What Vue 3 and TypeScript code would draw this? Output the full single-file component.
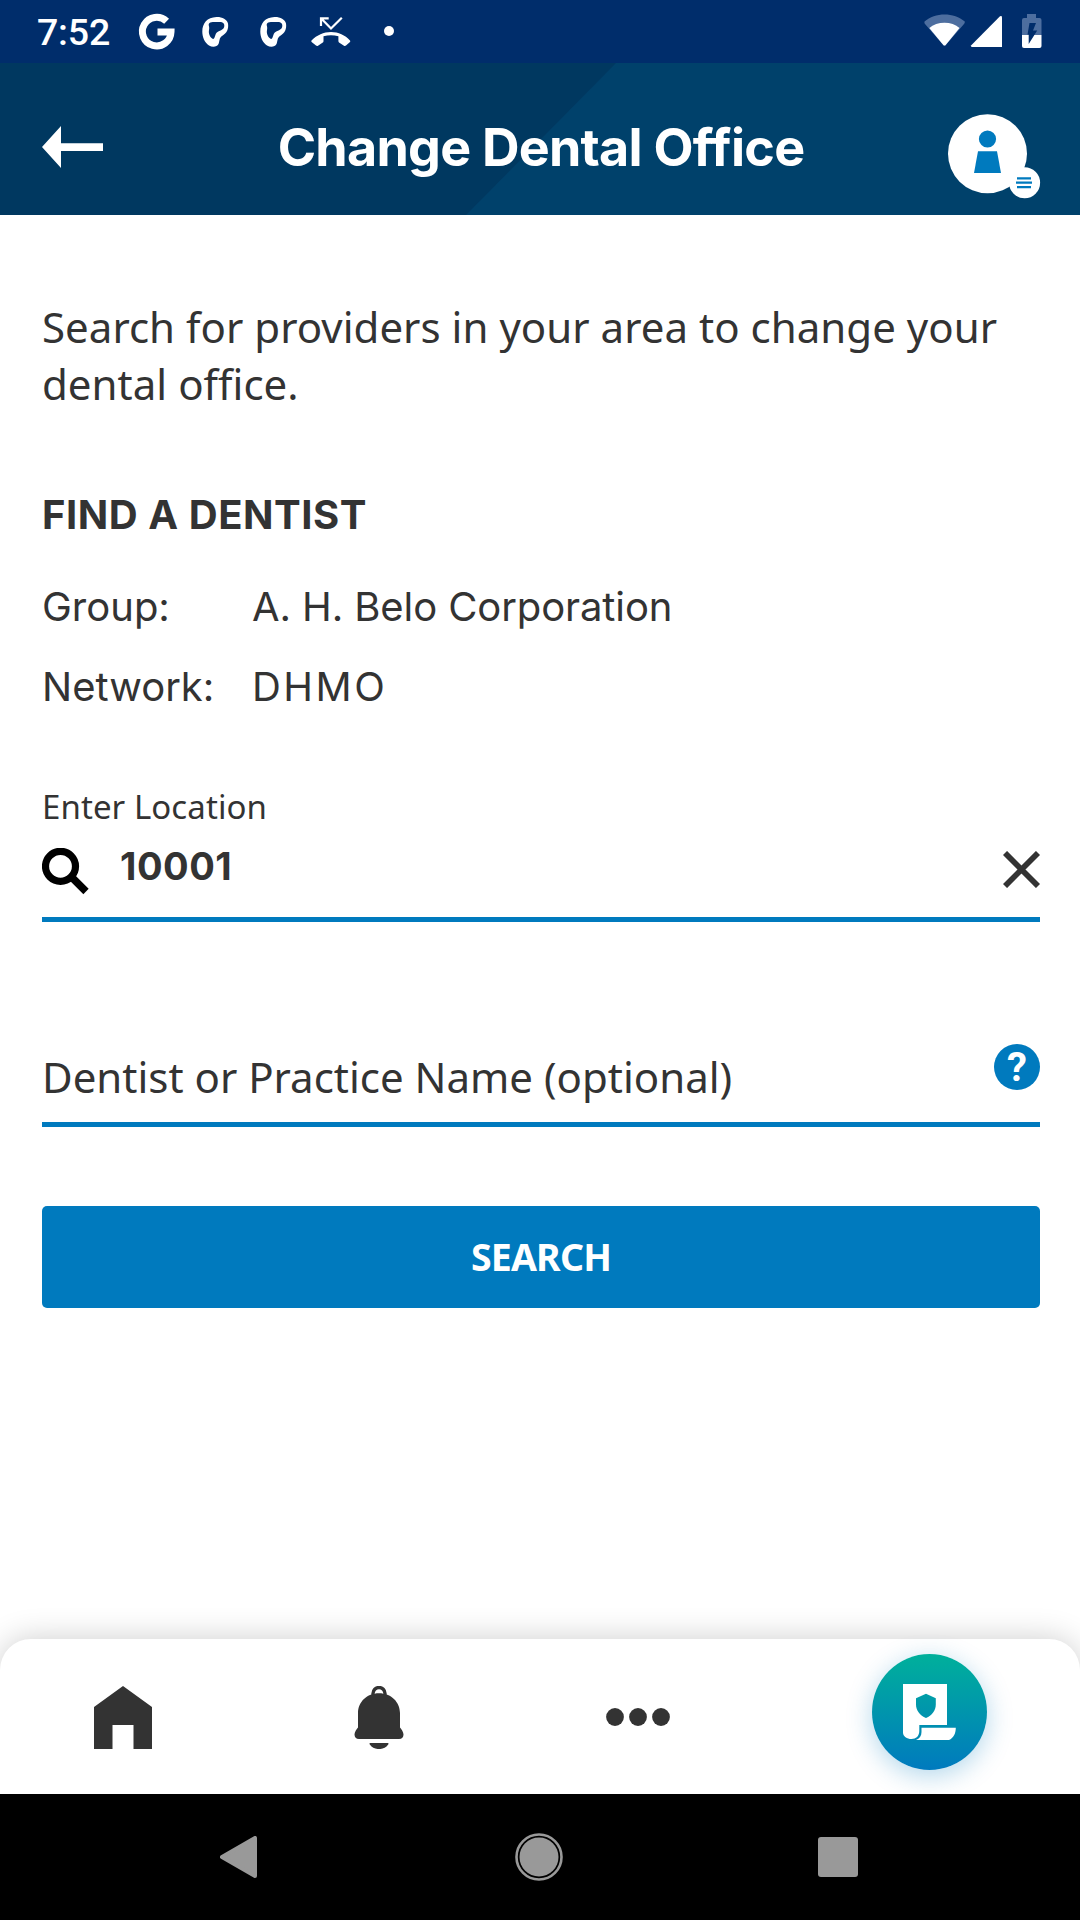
<script setup lang="ts">
interface Detail {
  label: string
  value: string
  acronym?: boolean
}

const details: Detail[] = [
  { label: 'Group:', value: 'A. H. Belo Corporation' },
  { label: 'Network:', value: 'DHMO', acronym: true },
]
</script>

<template>
  <div class="screen">
    <div class="status">
      <span class="clock">7:52</span>
      <svg class="status-left" width="270" height="63" viewBox="130 0 270 63">
        <path d="M166.600 21.300A14.300 14.300 0 1 0 171 32H157.500" fill="none" stroke="#fff" stroke-width="7" />
        <g v-for="dx in [0, 58]" :key="dx" :transform="`translate(${dx} 0)`">
          <path
            fill="#fff"
            fill-rule="evenodd"
            d="M216.500 17C222 16.800 227 19.500 228 23.500C228.800 29 227 33 222 36C219 38 219.800 41 218.500 44C217 47 212.500 47.500 209 45.500C204.500 42.500 202.300 37 202.300 31.500C202.300 23.500 207 17.300 216.500 17ZM209.500 23C207.500 25 210 26 209 30C208.300 33.500 210 37.500 213 39C215.500 38.500 214.500 34 217.500 32C221 30 224 29.500 224.300 26C224.500 22.500 222 22 218.500 22C215 22 211 21.500 209.500 23Z"
          />
        </g>
        <path d="M321 26V18.300H328.700M321.500 18.800L331 28.500L341.800 17.800" fill="none" stroke="#fff" stroke-width="2.200" />
        <path
          fill="#fff"
          d="M311.500 40.500C317 35 323.500 32 331 32C338.500 32 345 35 350 40.500C350.400 41 350.400 41.500 350 42L346 45.500C345.500 46 344.700 46.200 344 45.700L339 42.500C338.600 42 338.400 41.700 338.400 41V36.300C333.500 35 328.500 35 323.500 36.300V41C323.500 41.700 323.300 42.200 322.800 42.500L318 45.700C317.300 46.200 316.500 46 316 45.500L311.600 42C311.200 41.500 311.200 41 311.500 40.500Z"
        />
        <circle cx="389" cy="31" r="5" fill="#fff" />
      </svg>
      <svg class="status-right" width="130" height="63" viewBox="920 0 130 63">
        <path d="M924.500 21.500C935 12 954 12 964.800 21.500Q965 23 964 24L945.500 45.200Q944.500 46 943.500 45.200L925 24Q924 23 924.500 21.500Z" fill="#4d6e9f" />
        <path d="M929.300 28C937 21 952 21 959.500 28L945.500 45.200Q944.500 46 943.500 45.200Z" fill="#fff" />
        <path d="M971 45.500L1000 16.300Q1002 15.500 1002 17.500V47H972Q970.500 46.500 971 45.500Z" fill="#fff" />
        <path d="M1024 18H1027V14H1036V18H1039.500Q1041.500 18 1041.500 20V35H1022V20Q1022 18 1024 18Z" fill="#4d6e9f" />
        <path d="M1022 35H1041.500V46Q1041.500 48 1039.500 48H1024Q1022 48 1022 46Z" fill="#fff" />
        <path d="M1029.500 23H1036L1033 30.500H1037.200L1028.700 44V34.500H1027.500Z" fill="#002d6b" />
      </svg>
    </div>

    <header class="header">
      <svg class="back" width="61" height="42" viewBox="0 0 61 42">
        <path d="M0 21L19 0V17.300H61V25H19V42Z" fill="#fff" />
      </svg>
      <h1 class="title">Change Dental Office</h1>
      <svg class="avatar" width="93" height="86" viewBox="0 0 93 86">
        <circle cx="39.500" cy="39.700" r="39.500" fill="#fff" />
        <circle cx="39.500" cy="25" r="8.600" fill="#007abe" />
        <path d="M30 37.300H49L53 59H26Z" fill="#007abe" />
        <circle cx="76.600" cy="68.700" r="15.500" fill="#fff" />
        <path d="M69 64.300H83M68 68.700H84M69 73.100H83" stroke="#007abe" stroke-width="2.200" />
      </svg>
    </header>

    <main class="content">
      <p class="intro">Search for providers in your area to change your dental office.</p>
      <h2 class="heading">FIND A DENTIST</h2>
      <dl class="details">
        <div v-for="d in details" :key="d.label" class="detail">
          <dt>{{ d.label }}</dt>
          <dd :class="{ acronym: d.acronym }">{{ d.value }}</dd>
        </div>
      </dl>

      <div class="caption">Enter Location</div>
      <div class="field location">
        <svg class="magnifier" width="47" height="47" viewBox="0 0 47 47">
          <circle cx="18.500" cy="18.300" r="15" fill="none" stroke="#000" stroke-width="7.200" />
          <path d="M28.500 28L44 43.500" stroke="#000" stroke-width="7.500" />
        </svg>
        <span class="zip">10001</span>
        <svg class="clear" width="37" height="37" viewBox="0 0 37 37">
          <path d="M2 2L35 35M35 2L2 35" stroke="#333" stroke-width="5.800" />
        </svg>
      </div>

      <div class="field practice">
        <span class="placeholder">Dentist or Practice Name (optional)</span>
        <span class="help">?</span>
      </div>

      <button class="search" type="button">SEARCH</button>
    </main>

    <nav class="tabs">
      <div class="tab">
        <svg width="58" height="63" viewBox="0 0 58 63">
          <path d="M29 0L58 21V63H39.500V39H18.500V63H0V21Z" fill="#333" />
        </svg>
      </div>
      <div class="tab">
        <svg width="50" height="63" viewBox="0 0 50 63">
          <path d="M19 9V7.500A6 6 0 0 1 31 7.500V9" fill="none" stroke="#333" stroke-width="3.400" />
          <path d="M25 7.300C37 7.300 46 16 46 27V41.500C47.500 43.500 49.500 46 49.500 48.500C49.500 51 48 53 45 53H5C2 53 .5 51 .5 48.500C.5 46 2.500 43.500 4 41.500V27C4 16 13 7.300 25 7.300Z" fill="#333" />
          <path d="M16 57H34Q35 57.500 34 58.800C30 64.500 20 64.500 16 58.800Q15 57.500 16 57Z" fill="#333" />
        </svg>
      </div>
      <div class="tab">
        <svg width="64" height="18" viewBox="0 0 64 18">
          <circle v-for="x in [9, 32, 55]" :key="x" :cx="x" cy="9" r="8.900" fill="#333" />
        </svg>
      </div>
      <div class="tab tab-plan">
        <div class="plan">
          <svg width="115" height="116" viewBox="0.500 0 115 116">
            <path
              fill="#fff"
              fill-rule="evenodd"
              d="M31.500 30H75.500V71H47.800V77C47.800 82 44.500 85 40 85C35.500 85 31.500 82.500 31.500 78.500ZM54.500 39.700L44.500 44.300V50.500C44.500 56.500 48.500 61.500 54.500 64C60.500 61.500 64.300 56.500 64.300 50.500V44.300Z"
            />
            <path d="M50 73.700H84.300C84.300 79.500 82 84 77.500 86H44.500C48 84.500 50 82 50 78Z" fill="#fff" />
          </svg>
        </div>
      </div>
    </nav>

    <div class="system">
      <svg class="sys-back" width="37" height="42" viewBox="0 0 37 42">
        <path d="M35 2V40L2 21Z" fill="#999" stroke="#999" stroke-width="4" stroke-linejoin="round" />
      </svg>
      <svg class="sys-home" width="48" height="48" viewBox="0 0 48 48">
        <circle cx="24" cy="24" r="22.500" fill="none" stroke="#999" stroke-width="2.600" />
        <circle cx="24" cy="24" r="19.500" fill="#999" />
      </svg>
      <div class="sys-recent"></div>
    </div>
  </div>
</template>

<style>
body {
  margin: 0;
}
</style>

<style scoped>
.screen {
  width: 1080px;
  height: 1920px;
  display: flex;
  flex-direction: column;
  overflow: hidden;
  background: #fff;
  color: #333;
  font-family: 'Noto Sans', 'Open Sans', sans-serif;
}
.status {
  height: 63px;
  flex: none;
  display: flex;
  align-items: center;
  background: #002d6b;
}
.clock {
  width: 93px;
  margin-left: 37px;
  padding-top: 2px;
  color: #fff;
  font: 500 37.500px/63px Roboto, sans-serif;
  letter-spacing: -0.200px;
  white-space: nowrap;
}
.status-right {
  margin-left: auto;
  margin-right: 30px;
}
.header {
  height: 152px;
  flex: none;
  box-sizing: border-box;
  padding: 16px 39px 0 42px;
  display: flex;
  align-items: center;
  background: #003860;
  position: relative;
}
.header::before {
  content: '';
  position: absolute;
  inset: 0;
  background: #00416b;
  clip-path: polygon(616px 0, 1080px 0, 1080px 152px, 466px 152px);
}
.back,
.title,
.avatar {
  position: relative;
  flex: none;
}
.title {
  flex: 1;
  margin: 2px 0 0 31px;
  text-align: center;
  color: #fff;
  font: 700 52px/70px Inter, sans-serif;
  letter-spacing: -0.750px;
  white-space: nowrap;
}
.avatar {
  margin-top: 20px;
}
.content {
  flex: 1;
  padding: 83px 40px 0 42px;
}
.intro {
  margin: 0;
  font-size: 42px;
  line-height: 57px;
  letter-spacing: 0.030px;
}
.heading {
  margin: 78px 0 0;
  font: 700 40px/50px Inter, sans-serif;
  letter-spacing: 0.550px;
}
.details {
  margin: 27px 0 0;
  font: 400 40px/80px Inter, sans-serif;
}
.detail {
  display: flex;
}
.detail dt {
  width: 210px;
}
.detail dd {
  margin: 0;
  letter-spacing: -0.100px;
}
.detail dd.acronym {
  letter-spacing: 2.500px;
}
.caption {
  margin-top: 58px;
  font-size: 33px;
  line-height: 44px;
  letter-spacing: 0.080px;
}
.field {
  box-sizing: border-box;
  display: flex;
  align-items: flex-start;
  border-bottom: 5px solid #007abe;
}
.location {
  height: 93px;
  padding-top: 19px;
}
.zip {
  flex: 1;
  margin-left: 31px;
  font: 700 38px/37px Inter, sans-serif;
  letter-spacing: 0.500px;
}
.clear {
  margin-top: 3px;
}
.practice {
  margin-top: 100px;
  height: 105px;
  padding-top: 22px;
}
.placeholder {
  flex: 1;
  margin-top: 5px;
  font-size: 42px;
  line-height: 56px;
  white-space: nowrap;
}
.help {
  width: 46px;
  height: 46px;
  border-radius: 50%;
  background: #007abe;
  color: #fff;
  text-align: center;
  font: 700 40px/47px Roboto, sans-serif;
}
.search {
  display: block;
  width: 998px;
  height: 102px;
  margin: 79px 0 0;
  padding: 0 0 1px;
  border: 0;
  border-radius: 5px;
  background: #007abe;
  color: #fff;
  font: 700 37.500px/100px 'Noto Sans', 'Open Sans', sans-serif;
  letter-spacing: -0.800px;
}
.tabs {
  height: 155px;
  flex: none;
  display: grid;
  grid-template-columns: 246px 266px 252px 316px;
  border-radius: 31px 31px 0 0;
  background: #fff;
  box-shadow: 0 0 32px rgba(0, 0, 0, 0.2);
}
.tab {
  display: flex;
  align-items: center;
  justify-content: center;
  padding-top: 1px;
}
.tab-plan {
  padding: 0 0 9px 14px;
}
.plan {
  width: 115px;
  height: 116px;
  border-radius: 50%;
  background: linear-gradient(#00b09b, #007abe);
  box-shadow: 0 6px 26px rgba(0, 122, 190, 0.3);
}
.plan svg {
  display: block;
}
.system {
  height: 126px;
  flex: none;
  display: flex;
  align-items: center;
  background: #000;
}
.sys-back {
  margin-left: 220px;
}
.sys-home {
  margin-left: 258px;
}
.sys-recent {
  width: 40px;
  height: 40px;
  margin-left: 255px;
  border-radius: 3px;
  background: #999;
}
</style>
